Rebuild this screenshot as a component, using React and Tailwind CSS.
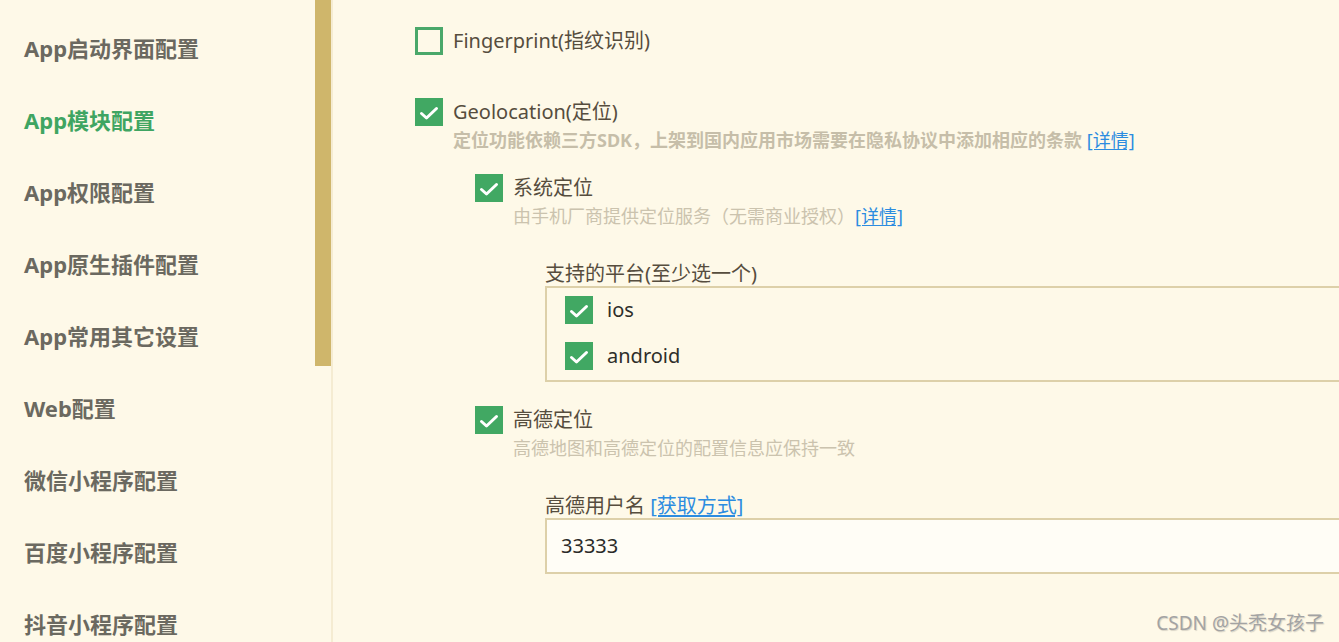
import React from 'react';

const menu = [
    'App启动界面配置',
    'App模块配置',
    'App权限配置',
    'App原生插件配置',
    'App常用其它设置',
    'Web配置',
    '微信小程序配置',
    '百度小程序配置',
    '抖音小程序配置',
];

const Box = ({ checked }) =>
    checked ? (
        <span className="w-[28px] h-[28px] shrink-0 bg-[#41a863] flex items-center justify-center">
            <svg width="28" height="28" viewBox="0 0 28 28">
                <polyline points="6.5,15.5 11.5,20 21.5,10.5" fill="none" stroke="#ffffff" strokeWidth="3" strokeLinecap="round" strokeLinejoin="round" />
            </svg>
        </span>
    ) : (
        <span className="w-[28px] h-[28px] shrink-0 border-[3px] border-[#4aa86a]"></span>
    );

const Check = ({ checked, label, dark }) => (
    <div className={`h-[28px] flex items-center ${dark ? 'gap-[14px]' : 'gap-[10px]'}`}>
        <Box checked={checked} />
        <span className={`text-[20px] leading-[28px] ${dark ? 'text-[#2e2e2a]' : 'text-[#564d3e]'}`}>{label}</span>
    </div>
);

const Link = ({ children }) => (
    <span className="text-[#2c8ce0] underline underline-offset-2 font-normal">{children}</span>
);

export default function App() {
    return (
        <div
            className="w-[1339px] h-[642px] flex bg-[#fef9e8] overflow-hidden relative"
            style={{ fontFamily: '"Noto Sans", "Noto Sans CJK SC", sans-serif' }}
        >
            <div className="w-[315px] shrink-0 pt-[12px] pl-[24px]">
                {menu.map((m, i) => (
                    <div
                        key={m}
                        className={`h-[72px] flex items-center text-[22px] font-bold whitespace-nowrap ${i === 1 ? 'text-[#3fa562]' : 'text-[#6b6960]'}`}
                    >
                        {m}
                    </div>
                ))}
            </div>
            <div className="w-[16px] shrink-0">
                <div className="h-[366px] bg-[#cfb66b]"></div>
            </div>
            <div className="w-[2px] shrink-0 bg-[#f5ecd2]"></div>

            <div className="flex-1 pl-[82px] pt-[27px] overflow-hidden">
                <Check checked={false} label="Fingerprint(指纹识别)" />

                <div className="mt-[43px]">
                    <Check checked label="Geolocation(定位)" />
                    <div className="mt-[2px] pl-[38px] text-[18px] leading-[24px] font-bold text-[#c6bea9] whitespace-nowrap">
                        定位功能依赖三方SDK，上架到国内应用市场需要在隐私协议中添加相应的条款 <Link>[详情]</Link>
                    </div>
                </div>

                <div className="pl-[60px]">
                    <div className="mt-[22px]">
                        <Check checked label="系统定位" />
                        <div className="mt-[2px] pl-[38px] text-[18px] leading-[24px] text-[#cbc3ae] whitespace-nowrap">
                            由手机厂商提供定位服务（无需商业授权）<Link>[详情]</Link>
                        </div>
                    </div>

                    <div className="pl-[70px]">
                        <div className="mt-[34px] text-[20px] leading-[24px] text-[#564d3e]">支持的平台(至少选一个)</div>
                        <div className="w-[820px] h-[96px] border-2 border-[#ddd0a9] pt-[8px] pl-[18px] flex flex-col gap-[18px]">
                            <Check checked dark label="ios" />
                            <Check checked dark label="android" />
                        </div>
                    </div>

                    <div className="mt-[24px]">
                        <Check checked label="高德定位" />
                        <div className="mt-[2px] pl-[38px] text-[18px] leading-[24px] text-[#cbc3ae] whitespace-nowrap">
                            高德地图和高德定位的配置信息应保持一致
                        </div>
                    </div>

                    <div className="pl-[70px]">
                        <div className="mt-[34px] text-[20px] leading-[24px] text-[#564d3e]">
                            高德用户名 <Link>[获取方式]</Link>
                        </div>
                        <div className="w-[820px] h-[56px] border-2 border-[#ddd0a9] bg-[#fffdf6] pl-[14px] flex items-center text-[20px] text-[#2a2a28]">
                            33333
                        </div>
                    </div>
                </div>
            </div>

            <div className="absolute right-[15px] bottom-[7px] text-[19px] leading-[24px] text-[#a3a3a3] whitespace-nowrap [text-shadow:1px_1px_1px_rgba(0,0,0,0.15)]">
                CSDN @头秃女孩子
            </div>
        </div>
    );
}
